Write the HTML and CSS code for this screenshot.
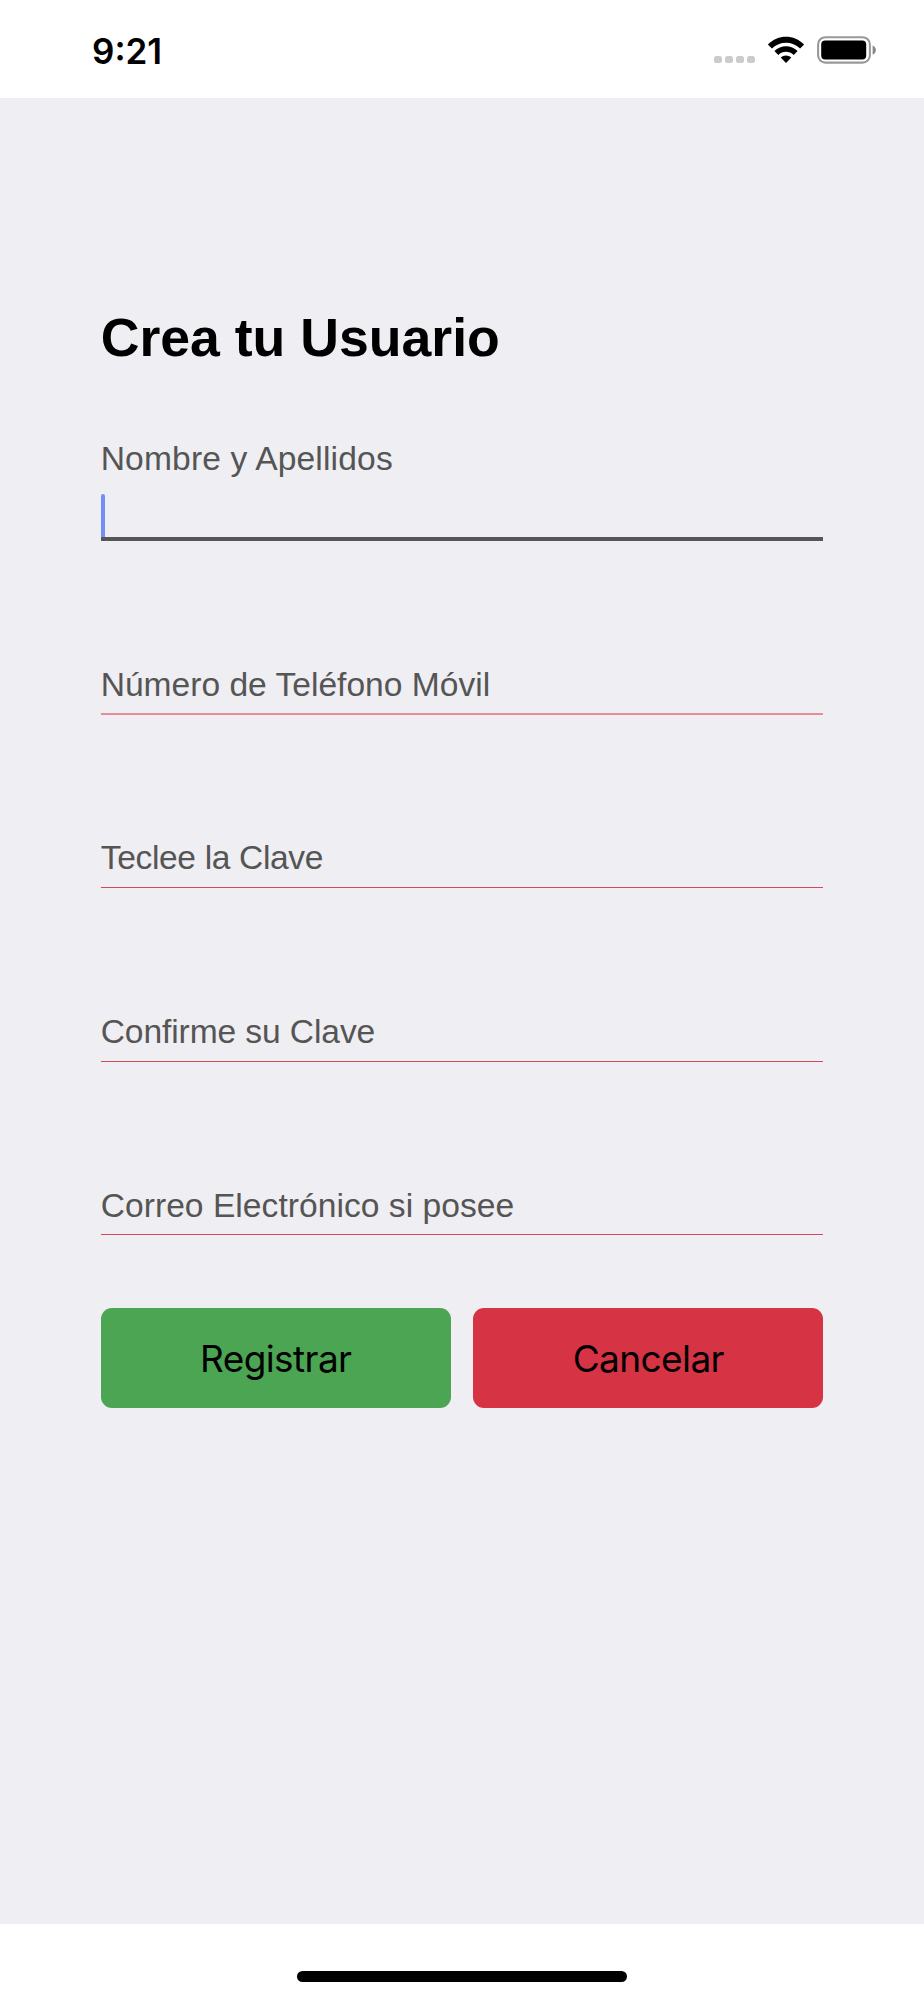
FILE: index.html
```
<!DOCTYPE html>
<html lang="es">

<head>
    <meta charset="utf-8">
    <title>Crea tu Usuario</title>
    <link rel="stylesheet" href="styles.css">
</head>

<body>
    <header class="status-bar">
        <span class="time">9:21</span>
        <div class="status-icons">
            <div class="signal">
                <i></i><i></i><i></i><i></i>
            </div>
            <svg class="wifi" width="38" height="28" viewBox="0 0 38 28">
                <path d="M.9 8.6C10.8-1.8 27.2-1.8 37.1 8.6L33.1 12.6C25.2 4.7 12.8 4.7 4.9 12.6Z" />
                <path d="M7.4 15.1C13.8 8.6 24.2 8.6 30.6 15.1L26.7 19C22.4 14.8 15.6 14.8 11.3 19Z" />
                <path d="M13.7 21.5C16.6 18.7 21.4 18.7 24.3 21.5L19 27Z" />
            </svg>
            <svg class="battery" width="60" height="28" viewBox="0 0 60 28">
                <rect x="1.1" y="1.2" width="51.8" height="25.4" rx="7.4" fill="none" stroke="#999" stroke-width="2.1" />
                <rect x="4.2" y="4.6" width="45" height="18.9" rx="4" />
                <path d="M55.6 9.4C60 11 60 17 55.6 18.6Z" fill="#888" />
            </svg>
        </div>
    </header>

    <main class="screen">
        <h1>Crea tu Usuario</h1>
        <form class="fields">
            <div class="field focused">
                <label>Nombre y Apellidos</label>
                <span class="caret"></span>
            </div>
            <div class="field phone">
                <label>Número de Teléfono Móvil</label>
            </div>
            <div class="field password">
                <label>Teclee la Clave</label>
            </div>
            <div class="field confirm">
                <label>Confirme su Clave</label>
            </div>
            <div class="field email">
                <label>Correo Electrónico si posee</label>
            </div>
        </form>
        <div class="actions">
            <button class="register">Registrar</button>
            <button class="cancel">Cancelar</button>
        </div>
    </main>

    <footer class="home-bar">
        <div class="indicator"></div>
    </footer>
</body>

</html>
```

FILE: styles.css
```
* {
    box-sizing: border-box;
}

body {
    margin: 0;
    height: 2000px;
    display: flex;
    flex-direction: column;
    background-color: white;
    font-family: "Liberation Sans", Arial, sans-serif;
}

.status-bar {
    height: 98px;
    display: flex;
    justify-content: space-between;
    padding: 29px 47px 0 92px;
}

.time {
    font-family: Inter, sans-serif;
    font-size: 35px;
    font-weight: 600;
    line-height: 44px;
}

.status-icons {
    display: flex;
    align-items: flex-start;
    padding-top: 7px;
}

.signal {
    display: flex;
    gap: 3px;
    margin: 20px 12px 0 0;
}

.signal i {
    width: 8px;
    height: 7px;
    border-radius: 2.5px;
    background-color: #cbcbcb;
}

.wifi {
    margin-right: 12px;
}

.screen {
    height: 1826px;
    padding: 209px 100.7px 0;
    background-color: #efeef3;
}

h1 {
    margin: 0 0 72px;
    font-size: 53.6px;
    line-height: 60px;
}

.fields {
    display: grid;
    grid-template-rows: 102px 174px 173px 174px 173px;
}

.field {
    display: flex;
    flex-direction: column;
    justify-content: flex-end;
    padding-bottom: 9px;
    border-bottom: 1px solid #d8485b;
}

.field label {
    color: #555;
    font-size: 33.6px;
    line-height: 40px;
}

.phone {
    padding-bottom: 8px;
    border-bottom: 2px solid #e98c99;
}

.password label {
    letter-spacing: -0.35px;
}

.confirm label {
    letter-spacing: -0.1px;
}

.email {
    padding-bottom: 8px;
}

.email label {
    letter-spacing: 0.04px;
}

.focused {
    justify-content: space-between;
    padding-bottom: 0;
    border-bottom: 4px solid #555;
}

.focused label {
    letter-spacing: 0.16px;
}

.caret {
    width: 4px;
    height: 43px;
    border-radius: 2px 2px 0 0;
    background-color: #738ff5;
}

.actions {
    display: flex;
    gap: 22.5px;
    margin-top: 73px;
}

button {
    flex: 1;
    height: 100.4px;
    padding: 0;
    border: none;
    border-radius: 11px;
    color: black;
    font-family: Inter, sans-serif;
    font-size: 37px;
    letter-spacing: -0.6px;
}

.register {
    background-color: #4ca552;
}

.cancel {
    background-color: #d63345;
}

.home-bar {
    display: flex;
    justify-content: center;
    padding-top: 47px;
}

.indicator {
    width: 330px;
    height: 11px;
    border-radius: 6px;
    background-color: black;
}
```
